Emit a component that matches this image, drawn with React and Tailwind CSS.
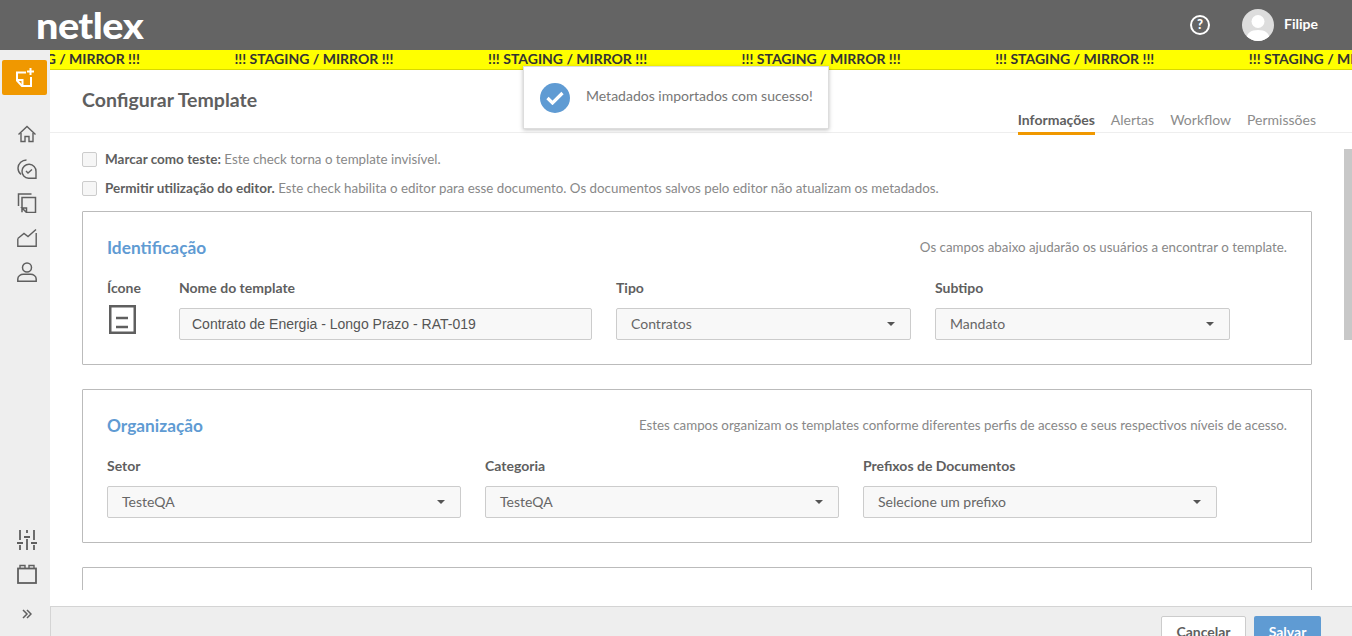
const lato = "font-['Lato',sans-serif]";

function HomeIcon() {
  return (
    <svg width="20" height="20" viewBox="0 0 20 20" fill="none" stroke="#5f5f5f" strokeWidth="1.4">
      <path d="M1.5 10.5 10 2.5l8.5 8" />
      <path d="M4 9v8.5h4v-5h4v5h4V9" />
    </svg>
  );
}

function CheckIcon() {
  return (
    <svg width="20" height="20" viewBox="0 0 20 20" fill="none" stroke="#5f5f5f" strokeWidth="1.4">
      <path d="M19 19.3h-7.5A7 7 0 1 1 19 12.5z" />
      <path d="M4 15.5A8.5 8.5 0 0 1 1 9 8.5 8.5 0 0 1 9.5 1" />
      <path d="m9 12 2 2 4-3.500" />
    </svg>
  );
}

function CopyIcon() {
  return (
    <svg width="20" height="20" viewBox="0 0 20 20" fill="none" stroke="#5f5f5f" strokeWidth="1.5">
      <path d="M1.500 13V1h13" />
      <path d="M5 19.300V4.500h13.500v15H9.500L5 15h4.500v4.300" />
    </svg>
  );
}

function ChartIcon() {
  return (
    <svg width="20" height="20" viewBox="0 0 20 20" fill="none" stroke="#5f5f5f" strokeWidth="1.4">
      <path d="M.8 10.500 7 5.500l4 3 8-7" />
      <path d="M.8 10.500v7.800h18.400V5" />
    </svg>
  );
}

function UserIcon() {
  return (
    <svg width="20" height="20" viewBox="0 0 20 20" fill="none" stroke="#5f5f5f" strokeWidth="1.500">
      <circle cx="10" cy="5.500" r="4.500" />
      <path d="M.8 19.200V17c0-3 3-4.800 5.500-4.800h7.400c2.500 0 5.500 1.800 5.500 4.800v2.200z" />
    </svg>
  );
}

function SlidersIcon() {
  return (
    <svg width="20" height="20" viewBox="0 0 20 20" fill="none" stroke="#5f5f5f" strokeWidth="1.800">
      <path d="M3 0v10M3 15v5M10 0v3M10 9v11M17 0v10M17 15v5" />
      <path d="M0 13h6M7 7h6M14 13h6" strokeWidth="2.200" />
    </svg>
  );
}

function BoxIcon() {
  return (
    <svg width="20" height="20" viewBox="0 0 20 20" fill="none" stroke="#5f5f5f" strokeWidth="1.800">
      <rect x="1" y="4.500" width="18" height="14.500" />
      <path d="M3 4V1.500h5V4M12 4V1.500h5V4" strokeWidth="1.400" />
    </svg>
  );
}

function Select({ value, className }) {
  return (
    <div className={`flex h-8 items-center justify-between rounded-[2px] border border-[#ccc] bg-[#f8f8f8] pr-[15px] pl-[14px] text-[14px] text-[#666] ${className}`}>
      <span className="mb-[1px]">{value}</span>
      <span className="h-0 w-0 border-x-[4px] border-t-[4px] border-x-transparent border-t-[#555]" />
    </div>
  );
}

function Label({ children }) {
  return <div className="mb-[11px] h-[18px] text-[14px] leading-[18px] font-bold text-[#5f5f5f]">{children}</div>;
}

function Card({ title, hint, children }) {
  return (
    <section className="h-[154px] rounded-[1px] border border-[#bbb] px-6 pt-[23px]">
      <div className="flex items-center justify-between">
        <h2 className="text-[17.300px] leading-[26px] font-bold text-[#5f9bd3]">{title}</h2>
        <p className="text-[13.330px] text-[#888]">{hint}</p>
      </div>
      <div className="mt-[18px] flex">{children}</div>
    </section>
  );
}

export default function App() {
  return (
    <div className={`relative flex h-screen flex-col overflow-hidden bg-white ${lato}`}>
      <header className="flex h-[50px] flex-none items-center justify-between bg-[#646464] pr-[34px] pl-[36px]">
        <div className="origin-left scale-x-[1.1] text-[36px] leading-[36px] font-black tracking-[-0.5px] text-white">netlex</div>
        <div className="flex items-center">
          <div className="flex h-5 w-5 items-center justify-center rounded-full border-2 border-white text-[13px] font-black text-white">?</div>
          <div className="ml-[32px] flex h-8 w-8 items-end justify-center overflow-hidden rounded-full bg-[#ddd]">
            <svg width="32" height="32" viewBox="0 0 32 32" fill="#fff">
              <circle cx="16" cy="12.500" r="6.500" />
              <path d="M4 32c0-8 5-11 12-11s12 3 12 11z" />
            </svg>
          </div>
          <span className="mb-[4px] ml-[10px] text-[14px] font-bold text-white">Filipe</span>
        </div>
      </header>

      <div className="flex min-h-0 flex-1">
        <aside className="flex w-[50px] flex-none flex-col bg-[#eee] pb-[12px] pl-[17px]">
          <div className="mt-[10px] ml-[-15px] flex h-[35px] w-[45px] items-center justify-center rounded-[2px] bg-[#f09800]">
            <svg width="20" height="20" viewBox="0 0 20 20" fill="none" stroke="#fff" strokeWidth="2">
              <path d="M11 4.500H2v8l5 5.500h9V9" />
              <path d="M2 12h5.500v6" />
              <path d="M15.500 0v7M12 3.500h7" />
            </svg>
          </div>
          <nav className="mt-[29px] flex flex-col gap-[14.500px]">
            <HomeIcon />
            <CheckIcon />
            <CopyIcon />
            <ChartIcon />
            <UserIcon />
          </nav>
          <div className="mt-auto flex flex-col">
            <SlidersIcon />
            <div className="mt-[14px]"><BoxIcon /></div>
            <div className="mt-[20px] flex h-5 w-5 items-center justify-center">
              <svg width="10" height="10" viewBox="0 0 10 10" fill="none" stroke="#5f5f5f" strokeWidth="1.500">
                <path d="m1 1 4 4-4 4M5 1l4 4-4 4" />
              </svg>
            </div>
          </div>
        </aside>

        <main className="flex min-w-0 flex-1 flex-col">
          <div className="flex h-5 flex-none overflow-hidden border-b border-[#d8d800] bg-[#ffff00] text-[14px] leading-[18px] font-bold text-[#333]">
            <div className="ml-[-69.200px] flex">
              {Array.from({ length: 7 }).map((_, i) => (
                <span key={i} className="w-[253.600px] flex-none whitespace-nowrap">!!! STAGING / MIRROR !!!</span>
              ))}
            </div>
          </div>

          <div className="flex h-[63px] flex-none justify-between border-b border-[#eee] pr-[36px] pl-[32px]">
            <h1 className="mt-[18px] text-[19.500px] leading-[24px] font-bold text-[#5f5f5f]">Configurar Template</h1>
            <div className="flex items-end gap-4 text-[14px] text-[#8c8c8c]">
              <span className="mb-[-3px] h-[26px] border-b-[3px] border-[#f09800] font-bold text-[#5f5f5f]">Informações</span>
              <span className="h-[23px]">Alertas</span>
              <span className="h-[23px]">Workflow</span>
              <span className="h-[23px]">Permissões</span>
            </div>
          </div>

          <div className="flex min-h-0 flex-1">
            <div className="mb-4 min-w-0 flex-1 overflow-hidden pr-[32px] pl-[32px]">
              <div className="mt-[16px] flex h-5 items-center gap-2 text-[13.330px] leading-5 text-[#888]">
                <span className="h-[15px] w-[15px] rounded-[2px] border border-[#ccc] bg-[#f6f6f6]" />
                <p><b className="text-[13.500px] leading-5 font-bold text-[#5f5f5f]">Marcar como teste:</b> Este check torna o template invisível.</p>
              </div>
              <div className="mt-[9px] flex h-5 items-center gap-2 text-[13.330px] leading-5 text-[#888]">
                <span className="h-[15px] w-[15px] rounded-[2px] border border-[#ccc] bg-[#f6f6f6]" />
                <p><b className="text-[13.500px] leading-5 font-bold text-[#5f5f5f]">Permitir utilização do editor.</b> Este check habilita o editor para esse documento. Os documentos salvos pelo editor não atualizam os metadados.</p>
              </div>

              <div className="mt-[13px] flex flex-col gap-6">
                <Card title="Identificação" hint="Os campos abaixo ajudarão os usuários a encontrar o template.">
                  <div className="w-[72px] flex-none">
                    <Label>Ícone</Label>
                    <svg className="mt-[-3px]" width="30" height="30" viewBox="0 0 30 30" fill="none" stroke="#5f5f5f">
                      <rect x="3.250" y="1.250" width="24.500" height="26.500" strokeWidth="2.500" />
                      <path d="M9 13h12M9 22h12" strokeWidth="2.500" />
                    </svg>
                  </div>
                  <div className="w-[413px] flex-none">
                    <Label>Nome do template</Label>
                    <div className="flex h-8 items-center rounded-[2px] border border-[#ccc] bg-[#f8f8f8] px-3 pt-[1px] font-['Liberation_Sans',sans-serif] text-[14px] text-[#555]">Contrato de Energia - Longo Prazo - RAT-019</div>
                  </div>
                  <div className="ml-6 w-[295px] flex-none">
                    <Label>Tipo</Label>
                    <Select value="Contratos" />
                  </div>
                  <div className="ml-6 w-[295px] flex-none">
                    <Label>Subtipo</Label>
                    <Select value="Mandato" />
                  </div>
                </Card>

                <Card title="Organização" hint="Estes campos organizam os templates conforme diferentes perfis de acesso e seus respectivos níveis de acesso.">
                  <div className="w-[354px] flex-none">
                    <Label>Setor</Label>
                    <Select value="TesteQA" />
                  </div>
                  <div className="ml-6 w-[354px] flex-none">
                    <Label>Categoria</Label>
                    <Select value="TesteQA" />
                  </div>
                  <div className="ml-6 w-[354px] flex-none">
                    <Label>Prefixos de Documentos</Label>
                    <Select value="Selecione um prefixo" />
                  </div>
                </Card>

                <section className="h-[154px] rounded-[1px] border border-[#bbb]" />
              </div>
            </div>
            <div className="w-2 flex-none pt-[16px]">
              <div className="h-[191px] bg-[#c8c8c8]" />
            </div>
          </div>

          <footer className="flex h-[30px] flex-none items-start justify-end gap-2 border-t border-l border-[#d4d4d4] bg-[#eee] pt-[9px] pr-[31px]">
            <button className="h-[30px] w-[85px] flex-none rounded-[2px] border border-[#ccc] bg-white text-[14px] font-bold text-[#5f5f5f]">Cancelar</button>
            <button className="h-[30px] w-[67px] flex-none rounded-[2px] bg-[#5f9bd3] text-[14px] font-bold text-white">Salvar</button>
          </footer>
        </main>
      </div>

      <div className="absolute top-[66px] left-[523px] flex h-[63px] w-[306px] items-center gap-4 border border-[#ddd] bg-white pl-4 shadow-[0_1px_4px_rgba(0,0,0,0.25)]">
        <div className="flex h-[30px] w-[30px] flex-none items-center justify-center rounded-full bg-[#5f9bd3]">
          <svg width="18" height="14" viewBox="0 0 18 14" fill="none" stroke="#fff" strokeWidth="3.200">
            <path d="m1.500 7 5 5 10-10" />
          </svg>
        </div>
        <span className="mb-[4px] text-[14px] text-[#777]">Metadados importados com sucesso!</span>
      </div>
    </div>
  );
}
